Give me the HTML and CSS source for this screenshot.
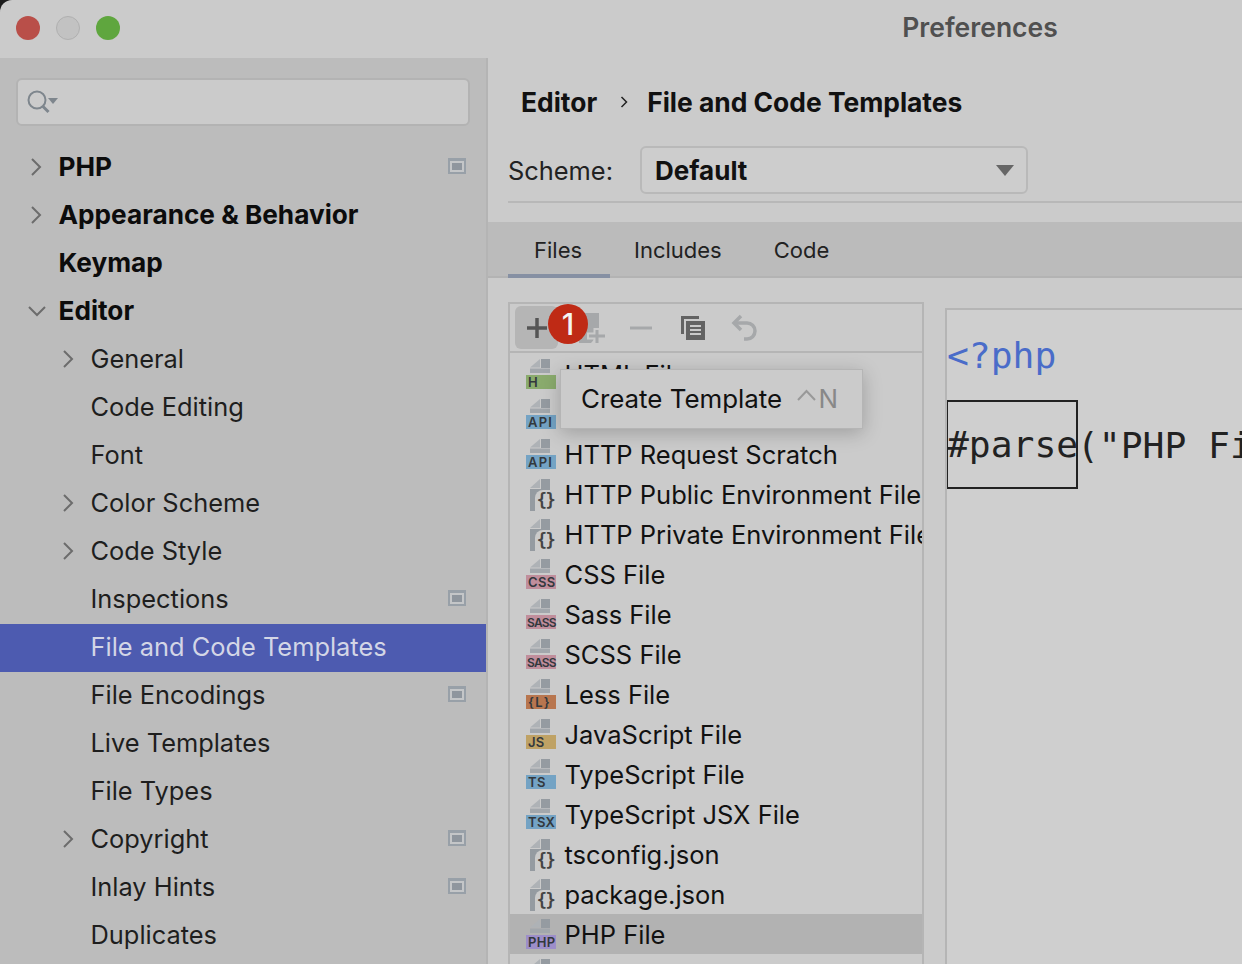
FILE: index.html
```html
<!DOCTYPE html>
<html lang="en">
<head>
    <meta charset="UTF-8">
    <meta name="viewport" content="width=device-width, initial-scale=1.0">
    <title>Preferences</title>
    <link rel="stylesheet" href="styles.css">
</head>
<body>

    <svg class="defs" width="0" height="0">
        <symbol id="chev-r" viewBox="0 0 12 20"><path d="M2 2l8 8-8 8" fill="none" stroke="currentColor" stroke-width="2"/></symbol>
        <symbol id="chev-d" viewBox="0 0 20 12"><path d="M2 2l8 8 8-8" fill="none" stroke="currentColor" stroke-width="2"/></symbol>
        <symbol id="proj" viewBox="0 0 18 16"><rect width="18" height="16" fill="#98a0a8"/><rect x="2" y="3" width="14" height="11" fill="#c4c6c8"/><rect x="4" y="5" width="10" height="7" fill="#8f969e"/></symbol>
        <symbol id="doc" viewBox="0 0 20 14"><path d="M0 8.500L10 0v8.500z" fill="#aeb2b6"/><path d="M11 0h9v9h-9z" fill="#959ba1"/><path d="M0 9.500h20V14H0z" fill="#a2a7ac"/></symbol>
        <symbol id="doc-json" viewBox="0 0 20 32"><path d="M0 9L10 0v9z" fill="#aeb2b6"/><path d="M11 0h9v10h-9z" fill="#959ba1"/><path d="M0 10h20v22H0z" fill="#959ba1"/></symbol>
    </svg>

    <div class="window">
        <div class="titlebar">
            <div class="lights">
                <i class="light red"></i>
                <i class="light grey"></i>
                <i class="light green"></i>
            </div>
            <div class="wintitle">Preferences</div>
        </div>

        <div class="content">
            <div class="sidebar">
                <div class="search">
                    <svg width="34" height="26" viewBox="0 0 34 26">
                        <circle cx="11" cy="11" r="8.500" fill="none" stroke="#7e868d" stroke-width="2"/>
                        <path d="M16.500 17l6 6" stroke="#7e868d" stroke-width="3"/>
                        <path d="M22 9h10l-5 6z" fill="#7e868d"/>
                    </svg>
                </div>
                <div class="tree">
                    <div class="node top"><svg class="chev"><use href="#chev-r"/></svg><span>PHP</span><svg class="proj"><use href="#proj"/></svg></div>
                    <div class="node top"><svg class="chev"><use href="#chev-r"/></svg><span>Appearance &amp; Behavior</span></div>
                    <div class="node top"><span>Keymap</span></div>
                    <div class="node top"><svg class="chevd"><use href="#chev-d"/></svg><span>Editor</span></div>
                    <div class="node sub"><svg class="chev"><use href="#chev-r"/></svg><span>General</span></div>
                    <div class="node sub"><span>Code Editing</span></div>
                    <div class="node sub"><span>Font</span></div>
                    <div class="node sub"><svg class="chev"><use href="#chev-r"/></svg><span>Color Scheme</span></div>
                    <div class="node sub"><svg class="chev"><use href="#chev-r"/></svg><span>Code Style</span></div>
                    <div class="node sub"><span>Inspections</span><svg class="proj"><use href="#proj"/></svg></div>
                    <div class="node sub selected"><span>File and Code Templates</span></div>
                    <div class="node sub"><span>File Encodings</span><svg class="proj"><use href="#proj"/></svg></div>
                    <div class="node sub"><span>Live Templates</span></div>
                    <div class="node sub"><span>File Types</span></div>
                    <div class="node sub"><svg class="chev"><use href="#chev-r"/></svg><span>Copyright</span><svg class="proj"><use href="#proj"/></svg></div>
                    <div class="node sub"><span>Inlay Hints</span><svg class="proj"><use href="#proj"/></svg></div>
                    <div class="node sub"><span>Duplicates</span></div>
                </div>
            </div>

            <div class="main">
                <div class="crumbs">
                    <b>Editor</b>
                    <svg class="crumbsep" width="8" height="12" viewBox="0 0 8 12"><path d="M1.500 1l5 5-5 5" fill="none" stroke="#222" stroke-width="1.500"/></svg>
                    <b>File and Code Templates</b>
                </div>

                <div class="scheme">
                    <label>Scheme:</label>
                    <div class="select"><b>Default</b><i class="caret"></i></div>
                </div>

                <div class="tabs">
                    <div class="tab active">Files</div>
                    <div class="tab">Includes</div>
                    <div class="tab">Code</div>
                </div>

                <div class="panes">
                    <div class="listpane">
                        <div class="toolbar">
                            <div class="tool hot">
                                <svg width="22" height="22" viewBox="0 0 22 22"><path d="M11 1v20M1 11h20" stroke="#555" stroke-width="3.500"/></svg>
                            </div>
                            <div class="tool">
                                <svg width="34" height="32" viewBox="0 0 34 32"><path d="M7 1h20v21l-8 9H7z" fill="#a6a8aa"/><path d="M15 24h20M25 16v16" stroke="#cbcbcb" stroke-width="7"/><path d="M17 24h16M25 18v13" stroke="#a6a8aa" stroke-width="3"/></svg>
                            </div>
                            <div class="tool">
                                <svg width="22" height="4" viewBox="0 0 22 4"><path d="M0 2h22" stroke="#a6a8aa" stroke-width="3"/></svg>
                            </div>
                            <div class="tool">
                                <svg width="26" height="26" viewBox="0 0 26 26"><path d="M1 1h18v3H4v15H1z" fill="#636363"/><path d="M6 6h19v19H6z" fill="#636363"/><path d="M10 11h11M10 15h11M10 19h11" stroke="#c9c9c9" stroke-width="1.800"/></svg>
                            </div>
                            <div class="tool">
                                <svg width="28" height="28" viewBox="0 0 28 28"><path d="M10 2L3 9l7 7" fill="none" stroke="#a6a8aa" stroke-width="3.500"/><path d="M4 9h12a8 8 0 0 1 8 8v0a8 8 0 0 1-8 8h-3" fill="none" stroke="#a6a8aa" stroke-width="3.500"/></svg>
                            </div>
                        </div>
                        <div class="files">
                            <div class="file"><span class="ficon"><svg class="doc"><use href="#doc"/></svg><em class="tag green">H</em></span>HTML File</div>
                            <div class="file"><span class="ficon"><svg class="doc"><use href="#doc"/></svg><em class="tag blue wide">API</em></span>HTTP Request</div>
                            <div class="file"><span class="ficon"><svg class="doc"><use href="#doc"/></svg><em class="tag blue wide">API</em></span>HTTP Request Scratch</div>
                            <div class="file"><span class="ficon"><svg class="docj"><use href="#doc-json"/></svg><em class="braces">{}</em></span>HTTP Public Environment File</div>
                            <div class="file"><span class="ficon"><svg class="docj"><use href="#doc-json"/></svg><em class="braces">{}</em></span>HTTP Private Environment File</div>
                            <div class="file"><span class="ficon"><svg class="doc"><use href="#doc"/></svg><em class="tag pink">CSS</em></span>CSS File</div>
                            <div class="file"><span class="ficon"><svg class="doc"><use href="#doc"/></svg><em class="tag pink tight">SASS</em></span>Sass File</div>
                            <div class="file"><span class="ficon"><svg class="doc"><use href="#doc"/></svg><em class="tag pink tight">SASS</em></span>SCSS File</div>
                            <div class="file"><span class="ficon"><svg class="doc"><use href="#doc"/></svg><em class="tag orange wide">{L}</em></span>Less File</div>
                            <div class="file"><span class="ficon"><svg class="doc"><use href="#doc"/></svg><em class="tag yellow">JS</em></span>JavaScript File</div>
                            <div class="file"><span class="ficon"><svg class="doc"><use href="#doc"/></svg><em class="tag blue">TS</em></span>TypeScript File</div>
                            <div class="file"><span class="ficon"><svg class="doc"><use href="#doc"/></svg><em class="tag blue">TSX</em></span>TypeScript JSX File</div>
                            <div class="file"><span class="ficon"><svg class="docj"><use href="#doc-json"/></svg><em class="braces">{}</em></span>tsconfig.json</div>
                            <div class="file"><span class="ficon"><svg class="docj"><use href="#doc-json"/></svg><em class="braces">{}</em></span>package.json</div>
                            <div class="file picked"><span class="ficon"><svg class="doc"><use href="#doc"/></svg><em class="tag purple">PHP</em></span>PHP File</div>
                            <div class="file"><span class="ficon"><svg class="doc"><use href="#doc"/></svg><em class="tag purple">PHP</em></span>PHP Class</div>
                        </div>

                        <div class="stepbadge">1</div>
                        <div class="tooltip">
                            <span>Create Template</span>
                            <span class="keys">
                                <svg width="19" height="12" viewBox="0 0 19 12"><path d="M1 11l8.500-9 8.500 9" fill="none" stroke="#999" stroke-width="2"/></svg>
                                N
                            </span>
                        </div>
                    </div>

                    <div class="editor">
                        <div class="line phptag">&lt;?php</div>
                        <div class="line"><span class="macro">#parse</span>("PHP File Header.php")</div>
                    </div>
                </div>
            </div>
        </div>
    </div>

</body>
</html>
```

FILE: styles.css
```css
* {
    margin: 0;
    padding: 0;
    box-sizing: border-box;
}

html, body {
    height: 964px;
    overflow: hidden;
    background-color: #1c1c1c;
}

body {
    font-family: "Inter", "Liberation Sans", sans-serif;
    color: #111;
}

.defs {
    display: block;
    height: 0;
}

.window {
    height: 964px;
    background-color: #cbcbcb;
    border-top-left-radius: 12px;
    overflow: hidden;
    display: flex;
    flex-direction: column;
}

/* title bar */
.titlebar {
    height: 58px;
    flex: none;
    display: flex;
    align-items: center;
    padding-left: 16px;
}

.lights {
    display: flex;
    gap: 16px;
    width: 804px;
    margin-top: -2px;
}

.light {
    width: 24px;
    height: 24px;
    border-radius: 50%;
}

.light.red { background-color: #b94f49; }
.light.grey { background-color: #c2c2c2; border: 1px solid #b0b0b0; }
.light.green { background-color: #5fa63e; }

.wintitle {
    width: 320px;
    text-align: center;
    font-size: 26.5px;
    font-weight: 600;
    color: #505050;
    margin-top: -5px;
}

.content {
    flex: 1;
    display: flex;
    min-height: 0;
}

/* left tree */
.sidebar {
    width: 488px;
    flex: none;
    background-color: #bcbcbc;
    border-right: 2px solid #b4b4b4;
    padding-top: 20px;
}

.search {
    height: 48px;
    margin: 0 16px;
    background-color: #cbcbcb;
    border: 2px solid #b3b3b3;
    border-radius: 6px;
    display: flex;
    align-items: center;
    padding-left: 8px;
}

.tree {
    margin-top: 18px;
}

.node {
    height: 48px;
    display: flex;
    align-items: center;
    position: relative;
    padding-bottom: 4px;
}

.node.top {
    padding-left: 58.5px;
    font-size: 26.2px;
    font-weight: 700;
    color: #0c0c0c;
}

.node.sub {
    padding-left: 90.5px;
    font-size: 25.4px;
    color: #1e1e1e;
}

.node.selected {
    background-color: #4d5bb0;
    color: #d3d6e6;
}

.chev, .chevd, .proj {
    position: absolute;
    color: #6c6c6c;
}

.chev {
    width: 12px;
    height: 20px;
    top: 13px;
}

.top .chev { left: 30px; }
.sub .chev { left: 62px; }

.chevd {
    width: 20px;
    height: 12px;
    left: 27px;
    top: 17px;
}

.proj {
    width: 18px;
    height: 16px;
    right: 20px;
    top: 14px;
}

/* right side */
.main {
    flex: 1;
    min-width: 0;
    display: flex;
    flex-direction: column;
}

.crumbs {
    height: 88px;
    flex: none;
    padding-left: 33px;
    display: flex;
    align-items: center;
    font-size: 26.4px;
}

.crumbs b { font-weight: 700; }

.crumbsep {
    margin: 0 19px 0 23px;
}

.scheme {
    height: 57px;
    flex: none;
    margin-left: 20px;
    border-bottom: 2px solid #b8b8b8;
    display: flex;
    align-items: flex-start;
    font-size: 25.4px;
}

.scheme label {
    width: 132px;
    line-height: 50px;
    color: #222;
}

.select {
    width: 388px;
    height: 48px;
    background-color: #cdcdcd;
    border: 2px solid #b9b9b9;
    border-radius: 6px;
    padding: 0 12px 0 13px;
    display: flex;
    align-items: center;
    justify-content: space-between;
    font-size: 26px;
}

.select b { font-weight: 700; }

.caret {
    border-left: 9px solid transparent;
    border-right: 9px solid transparent;
    border-top: 11px solid #666;
}

.tabs {
    height: 56px;
    flex: none;
    margin-top: 19px;
    padding-left: 20px;
    background-color: #bbb;
    border-bottom: 2px solid #b3b3b3;
    display: flex;
    font-size: 22px;
    color: #222;
}

.tab {
    padding: 0 26px;
    line-height: 56px;
}

.tab.active {
    width: 102px;
    height: 56px;
    border-bottom: 4px solid #8690a3;
}

.tab + .tab {
    padding: 0 27px 0 0;
    margin-left: 25px;
}

.tab.active + .tab {
    margin-left: 24px;
}

.panes {
    flex: 1;
    min-height: 0;
    display: flex;
    padding: 24px 0 0 20px;
}

.listpane {
    width: 416px;
    flex: none;
    position: relative;
    border: 2px solid #b5b5b5;
    border-bottom: none;
}

.toolbar {
    height: 49px;
    border-bottom: 2px solid #b5b5b5;
    display: flex;
    align-items: center;
    padding-left: 5px;
}

.tool {
    width: 43px;
    height: 43px;
    margin-right: 9px;
    display: flex;
    align-items: center;
    justify-content: center;
}

.tool.hot {
    background-color: #b5b5b5;
    border-radius: 6px;
}

.files {
    overflow: hidden;
    height: 640px;
    padding-top: 1px;
}

.file {
    height: 40px;
    display: flex;
    align-items: center;
    white-space: nowrap;
    font-size: 25.5px;
    color: #111;
    padding-left: 16px;
}

.file.picked {
    background-color: #b2b2b2;
}

.ficon {
    width: 30px;
    height: 32px;
    flex: none;
    position: relative;
    margin-right: 8.500px;
}

.doc, .docj {
    position: absolute;
    left: 4px;
}

.doc {
    width: 20px;
    height: 14px;
    top: 1px;
}

.docj {
    width: 20px;
    height: 32px;
    top: 1px;
}

.tag {
    position: absolute;
    left: 0;
    top: 17px;
    width: 30px;
    height: 14px;
    padding: 1px 0 0 2px;
    font-style: normal;
    font-weight: 600;
    font-size: 13px;
    line-height: 13px;
    letter-spacing: 0.3px;
    color: #33383d;
    white-space: nowrap;
}

.tag.wide { letter-spacing: 1.2px; }
.tag.tight { font-size: 12px; letter-spacing: -0.8px; padding-left: 1px; }
.green { background-color: #8aab6d; }
.blue { background-color: #74a3c4; }
.pink { background-color: #c08e9c; }
.orange { background-color: #b8764f; }
.yellow { background-color: #bfa265; }
.purple { background-color: #9d8ec9; }

.braces {
    position: absolute;
    left: 9px;
    top: 12px;
    width: 21px;
    height: 21px;
    background-color: #cbcbcb;
    border-radius: 8px 0 0 0;
    font-style: normal;
    font-family: "DejaVu Sans Mono", monospace;
    font-weight: 700;
    font-size: 17px;
    line-height: 21px;
    letter-spacing: -1.500px;
    text-align: center;
    color: #444;
}

/* things sitting over the list */
.stepbadge {
    position: absolute;
    left: 38px;
    top: 0;
    width: 40px;
    height: 40px;
    border-radius: 50%;
    background-color: #bf2a15;
    color: #f4f4f4;
    text-align: center;
    font-size: 30px;
    font-weight: 500;
    line-height: 40px;
}

.tooltip {
    position: absolute;
    left: 50px;
    top: 65px;
    width: 303px;
    height: 60px;
    background-color: #cbcbcb;
    border: 1px solid #b5b5b5;
    box-shadow: 0 4px 18px rgba(0, 0, 0, 0.22);
    padding: 0 24px 1px 20px;
    display: flex;
    align-items: center;
    justify-content: space-between;
    font-size: 25.9px;
}

.keys {
    color: #888;
    display: flex;
    align-items: center;
    gap: 2px;
}

.keys svg {
    margin-top: -8px;
}

/* code */
.editor {
    flex: 1;
    min-width: 0;
    margin: 6px 0 0 21px;
    padding: 0;
    border: 2px solid #b5b5b5;
    border-right: none;
    border-bottom: none;
    background-color: #cfcfcf;
    overflow: hidden;
    font-family: "DejaVu Sans Mono", monospace;
    font-size: 36.3px;
    color: #222;
}

.line {
    height: 45px;
    line-height: 45px;
    white-space: nowrap;
    margin-top: 23px;
}

.phptag {
    color: #4a6cc9;
}

.line + .line {
    margin-top: 45px;
}

.macro {
    display: inline-block;
    width: 130px;
    outline: 2px solid #222;
    outline-offset: -1px;
    height: 87px;
    margin-top: -22px;
    line-height: 87px;
    vertical-align: top;
}
```
